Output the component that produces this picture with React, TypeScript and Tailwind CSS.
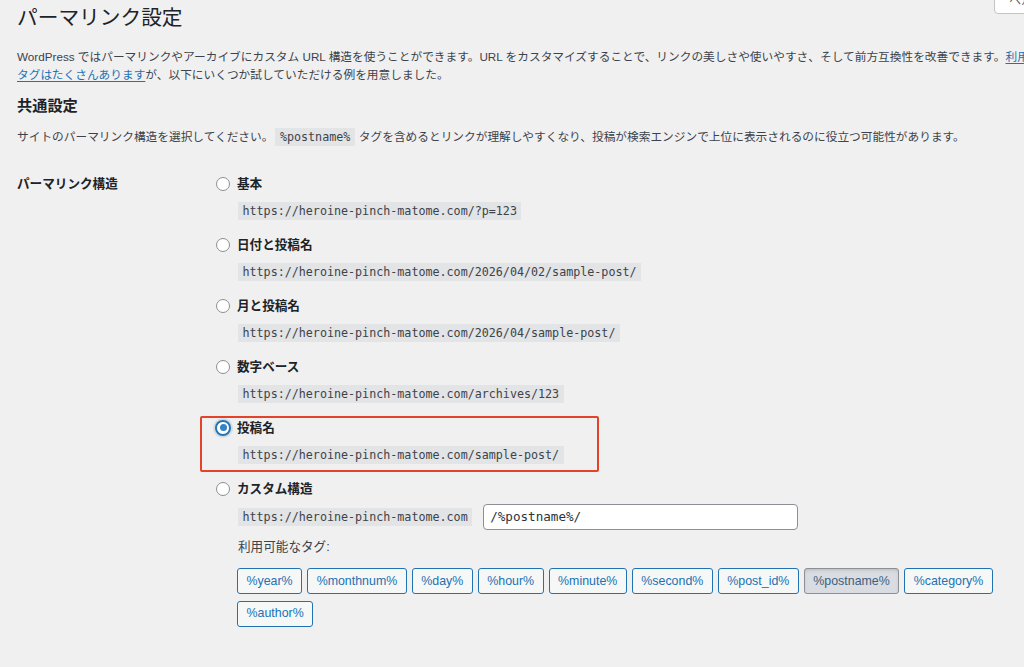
import React from 'react';

const sans = "font-['Liberation_Sans','Noto_Sans_CJK_JP',sans-serif]";

const Code: React.FC<{ children: React.ReactNode }> = ({ children }) => (
  <code className="inline-block h-[18px] bg-[#e3e4e6] px-[4.5px] font-['DejaVu_Sans_Mono','Noto_Sans_CJK_JP',monospace] text-[11.7px] leading-[18px] text-[#3c434a]">
    {children}
  </code>
);

const Radio: React.FC<{ checked?: boolean }> = ({ checked }) =>
  checked ? (
    <span className="flex h-[14.4px] w-[14.4px] shrink-0 items-center justify-center rounded-full border border-[#2271b1] bg-white shadow-[0_0_0_1px_#2271b1,0_0_0_3px_rgba(34,113,177,0.15)]">
      <span className="h-[7px] w-[7px] rounded-full bg-[#3582c4]" />
    </span>
  ) : (
    <span className="h-[14.4px] w-[14.4px] shrink-0 rounded-full border border-[#8c8f94] bg-white" />
  );

const options = [
  { label: '基本', url: 'https://heroine-pinch-matome.com/?p=123' },
  { label: '日付と投稿名', url: 'https://heroine-pinch-matome.com/2026/04/02/sample-post/' },
  { label: '月と投稿名', url: 'https://heroine-pinch-matome.com/2026/04/sample-post/' },
  { label: '数字ベース', url: 'https://heroine-pinch-matome.com/archives/123' },
  { label: '投稿名', url: 'https://heroine-pinch-matome.com/sample-post/', checked: true },
];

const tags = ['%year%', '%monthnum%', '%day%', '%hour%', '%minute%', '%second%', '%post_id%', '%postname%', '%category%', '%author%'];

const App: React.FC = () => {
  return (
    <div className={`relative h-[667px] w-[1024px] overflow-hidden bg-[#f0f0f1] text-[#3c434a] ${sans}`}>
      {/* help tab, cut off at the corner */}
      <div className="absolute left-[994px] top-[-14px] h-[28px] w-[90px] rounded-b-[4px] border border-[#c3c4c7] bg-white pl-[14px] text-[12px] leading-[28px] text-[#646970]">
        ヘルプ ▼
      </div>

      <div className="w-[1120px] pl-[17px]">
        <h1 className="pt-[4px] text-[20.7px] font-normal leading-[27px] text-[#1d2327]">パーマリンク設定</h1>

        <p className="mt-[17px] whitespace-nowrap text-[11.7px] leading-[17.5px]">
          WordPress ではパーマリンクやアーカイブにカスタム URL 構造を使うことができます。URL をカスタマイズすることで、リンクの美しさや使いやすさ、そして前方互換性を改善できます。
          <a href="#" className="text-[#2271b1] underline underline-offset-2">
            利用可能な
            <br />
            タグはたくさんあります
          </a>
          が、以下にいくつか試していただける例を用意しました。
        </p>

        <h2 className="mt-[11.5px] text-[15.2px] font-semibold leading-[21px] text-[#1d2327]">共通設定</h2>

        <p className="mt-[12.5px] flex items-center whitespace-nowrap text-[11.7px] leading-[18px]">
          <span>サイトのパーマリンク構造を選択してください。</span>
          <span className="ml-[2px] flex">
            <Code>%postname%</Code>
          </span>
          <span className="ml-[4px]">タグを含めるとリンクが理解しやすくなり、投稿が検索エンジンで上位に表示されるのに役立つ可能性があります。</span>
        </p>

        <div className="mt-[29px] flex">
          <div className="w-[199px] text-[12.6px] font-semibold leading-[18px] text-[#1d2327]">パーマリンク構造</div>

          <div className="flex flex-col gap-[16px]">
            {options.map((o) => (
              <div key={o.label} className="relative">
                {o.checked && (
                  <div className="pointer-events-none absolute left-[-16px] top-[-3px] h-[56px] w-[399px] rounded-[2px] border-2 border-[#e3432b]" />
                )}
                <label className="flex h-[18px] items-center gap-[6.6px] leading-[18px]">
                  <Radio checked={o.checked} />
                  <span className="text-[12.6px] font-semibold text-[#1d2327]">{o.label}</span>
                </label>
                <div className="mt-[9px] flex pl-[22px]">
                  <Code>{o.url}</Code>
                </div>
              </div>
            ))}

            <div>
              <label className="flex h-[18px] items-center gap-[6.6px] leading-[18px]">
                <Radio />
                <span className="text-[12.6px] font-semibold text-[#1d2327]">カスタム構造</span>
              </label>
              <div className="mt-[6px] flex items-center gap-[11px] pl-[22px]">
                <Code>https://heroine-pinch-matome.com</Code>
                <div className="flex h-[26px] w-[315px] items-center rounded-[4px] border border-[#8c8f94] bg-white px-[6px] font-['DejaVu_Sans_Mono',monospace] text-[12.6px] text-[#2c3338]">
                  /%postname%/
                </div>
              </div>
              <div className="mt-[8px] pl-[22px] text-[12.6px] leading-[18px]">利用可能なタグ:</div>
              <ul className="ml-[21px] mt-[12px] flex w-[770px] flex-wrap gap-x-[5px] gap-y-[6.5px]">
                {tags.map((t) =>
                  t === '%postname%' ? (
                    <li key={t} className="flex">
                      <button className="h-[26px] rounded-[3px] border border-[#8c8f94] bg-[#d9dce1] px-[8.5px] font-['Liberation_Sans',sans-serif] text-[12.4px] text-[#3d5f80] shadow-[inset_0_2px_5px_-3px_#8c8f94]">
                        {t}
                      </button>
                    </li>
                  ) : (
                    <li key={t} className="flex">
                      <button className="h-[26px] rounded-[3px] border border-[#2271b1] bg-[#f6f7f7] px-[8.5px] font-['Liberation_Sans',sans-serif] text-[12.4px] text-[#2271b1]">
                        {t}
                      </button>
                    </li>
                  )
                )}
              </ul>
            </div>
          </div>
        </div>
      </div>
    </div>
  );
};

export default App;
